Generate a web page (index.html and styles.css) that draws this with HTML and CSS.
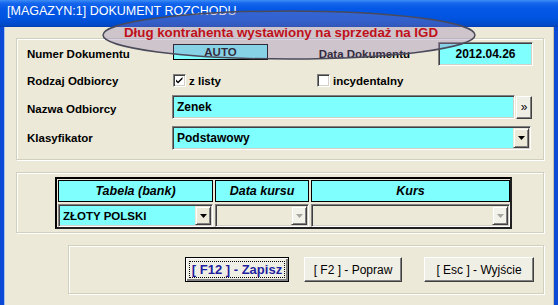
FILE: index.html
```html
<!DOCTYPE html>
<html>
<head>
<meta charset="utf-8">
<link rel="stylesheet" href="styles.css">
</head>
<body>
<div class="window">
  <div class="titlebar">[MAGAZYN:1] DOKUMENT ROZCHODU</div>
  <div class="frame">
    <div class="client">

      <div class="group group-doc">
        <div class="row row-1">
          <span class="label">Numer Dokumentu</span>
          <span class="auto">AUTO</span>
          <span class="label label-date">Data Dokumentu</span>
          <span class="field date">2012.04.26</span>
        </div>
        <div class="row row-2">
          <span class="label">Rodzaj Odbiorcy</span>
          <span class="check check-1">
            <span class="box"><svg width="11" height="11" viewBox="0 0 11 11"><path d="M2 4.5l2 2 4.5-4.5v2l-4.5 4.5-2-2z" fill="#000"/></svg></span>z listy
          </span>
          <span class="check"><span class="box"></span>incydentalny</span>
        </div>
        <div class="row row-3">
          <span class="label label-low">Nazwa Odbiorcy</span>
          <span class="field name">Zenek</span>
          <span class="btn-more">&raquo;</span>
        </div>
        <div class="row row-4">
          <span class="label">Klasyfikator</span>
          <span class="field combo">Podstawowy<span class="drop"><svg width="7" height="4" viewBox="0 0 7 4"><path d="M0 0h7l-3.5 4z" fill="#000"/></svg></span></span>
        </div>
      </div>

      <div class="group group-rates">
        <div class="rates">
          <div class="rates-row">
            <span class="head col-1">Tabela (bank)</span>
            <span class="head col-2">Data kursu</span>
            <span class="head col-3">Kurs</span>
          </div>
          <div class="rates-row rates-values">
            <span class="field cell col-1">ZŁOTY POLSKI<span class="drop"><svg width="7" height="4" viewBox="0 0 7 4"><path d="M0 0h7l-3.5 4z" fill="#000"/></svg></span></span>
            <span class="field cell disabled col-2"><span class="drop"><svg width="7" height="4" viewBox="0 0 7 4"><path d="M0 0h7l-3.5 4z" fill="#a7a69c"/></svg></span></span>
            <span class="field cell disabled col-3"><span class="drop"><svg width="7" height="4" viewBox="0 0 7 4"><path d="M0 0h7l-3.5 4z" fill="#a7a69c"/></svg></span></span>
          </div>
        </div>
      </div>

      <div class="group group-buttons">
        <span class="btn btn-default btn-save"><span class="focus">[ F12 ] - Zapisz</span></span>
        <span class="btn btn-edit">[ F2 ] - Popraw</span>
        <span class="btn btn-exit">[ Esc ] - Wyjście</span>
      </div>

    </div>
  </div>

  <div class="notice">
    <svg width="380" height="62" viewBox="0 0 380 62"><ellipse cx="189" cy="31" rx="186" ry="24" fill="rgba(150,125,180,0.34)" stroke="#4a4a5a" stroke-width="1.5"/></svg>
    <span class="notice-text">Dług kontrahenta wystawiony na sprzedaż na IGD</span>
  </div>
</div>
</body>
</html>
```

FILE: styles.css
```css
body {
  margin: 0;
  font-family: "Liberation Sans", Arial, sans-serif;
  color: #000;
}
.window {
  position: relative;
  width: 558px;
  height: 305px;
  overflow: hidden;
  background: #ECE9D8;
}
.titlebar {
  height: 23px;
  padding: 4px 0 0 7px;
  color: #fff;
  font-size: 12.5px;
  background: linear-gradient(#3D8DF5 0, #1767EE 3px, #0659E6 8px, #0054E0 18px, #0249C8 25px, #013FB0 27px);
}
.frame {
  height: 278px;
  border-left: 4px solid #0A4AD4;
  border-right: 4px solid #0A4AD4;
  box-shadow: inset 1px 0 #A8C0EC, inset -1px 0 #C5C2B2;
}
.client {
  padding: 11px 10px 0 12px;
}

/* etched group boxes */
.group {
  box-sizing: border-box;
  border: 1px solid #D0D0BF;
  box-shadow: inset 1px 1px #fff, 1px 1px #fff;
}
.group-doc {
  height: 122px;
  padding-left: 10px;
}
.row {
  display: flex;
  align-items: center;
  height: 24px;
}
.row-1 { margin-top: 3px; }
.row-2 { margin-top: 3px; }
.row-3 { margin-top: 2px; }
.row-4 { margin-top: 7px; }
.label {
  width: 145px;
  flex: none;
  font-size: 11.5px;
  font-weight: bold;
}
.label-low {
  padding-top: 3px;
}
.label-date {
  width: auto;
  margin-left: auto;
}
.auto {
  box-sizing: border-box;
  width: 95px;
  height: 16px;
  margin: -4px 0 0 1px;
  border: 1px solid #000;
  background: #80FFFF;
  text-align: center;
  font-size: 11.5px;
  font-weight: bold;
  line-height: 14px;
}

/* sunken cyan fields */
.field {
  box-sizing: border-box;
  display: flex;
  align-items: center;
  height: 24px;
  padding-left: 4px;
  background: #80FFFF;
  border: 1px solid;
  border-color: #808080 #fff #fff #808080;
  box-shadow: inset 1px 1px #404040, inset -1px -1px #D4D0C8;
  font-size: 12px;
  font-weight: bold;
}
.date {
  width: 95px;
  margin: 0 10px 0 28px;
  justify-content: center;
  padding-left: 0;
}
.name {
  width: 343px;
}
.combo {
  width: 359px;
  padding-right: 1px;
}
.drop {
  box-sizing: border-box;
  display: flex;
  align-items: center;
  justify-content: center;
  width: 16px;
  height: 20px;
  margin-left: auto;
  background: #ECE9D8;
  border: 1px solid;
  border-color: #ECE9D8 #404040 #404040 #ECE9D8;
  box-shadow: inset 1px 1px #fff, inset -1px -1px #808080;
}
.btn-more {
  box-sizing: border-box;
  display: flex;
  align-items: center;
  justify-content: center;
  width: 16px;
  height: 23px;
  margin-left: 1px;
  background: #F0EFE6;
  border: 1px solid;
  border-color: #fff #404040 #404040 #fff;
  box-shadow: inset -1px -1px #808080;
  font-size: 12px;
}

/* checkboxes */
.check {
  display: flex;
  align-items: center;
  font-size: 11.5px;
  font-weight: bold;
  margin-top: -1px;
}
.check-1 {
  width: 144px;
  margin-left: 1px;
}
.box {
  box-sizing: border-box;
  display: flex;
  align-items: center;
  justify-content: center;
  width: 13px;
  height: 13px;
  margin-right: 3px;
  background: #fff;
  border: 1px solid;
  border-color: #808080 #fff #fff #808080;
  box-shadow: inset 1px 1px #404040, inset -1px -1px #D4D0C8;
}

/* currency table */
.group-rates {
  height: 61px;
  margin-top: 12px;
  padding: 4px 0 0 38px;
}
.rates {
  box-sizing: border-box;
  width: 457px;
  height: 52px;
  padding: 1px 0 0 1px;
  border: 2px solid #000;
  border-color: #000 #202020 #202020 #000;
}
.rates-row {
  display: flex;
  gap: 2px;
}
.rates-values {
  margin-top: 2px;
}
.head {
  box-sizing: border-box;
  height: 22px;
  border: 1px solid #000;
  background: #80FFFF;
  text-align: center;
  font-size: 12.5px;
  font-weight: bold;
  font-style: italic;
  line-height: 20px;
}
.col-1 { width: 155px; }
.col-2 { width: 94px; }
.col-3 { width: 199px; }
.cell {
  height: 23px;
  padding-right: 1px;
  font-size: 11.5px;
}
.cell .drop {
  height: 19px;
}
.disabled {
  background: #ECE9D8;
}
.disabled .drop {
  background: #F3F2EA;
}

/* buttons */
.group-buttons {
  display: flex;
  height: 49px;
  margin: 12px 0 0 52px;
  padding: 11px 0 0 116px;
}
.btn {
  box-sizing: border-box;
  display: flex;
  align-items: center;
  justify-content: center;
  height: 25px;
  background: #F0EFE6;
  border: 1px solid;
  border-color: #fff #404040 #404040 #fff;
  box-shadow: inset -1px -1px #808080;
  font-size: 12px;
}
.btn-default {
  padding: 3px;
  border-color: #000;
  box-shadow: inset 1px 1px #fff, inset -2px -2px #808080;
  color: #1F1F9F;
  font-size: 13px;
  font-weight: bold;
}
.focus {
  display: flex;
  align-items: center;
  justify-content: center;
  flex: 1;
  align-self: stretch;
  border: 1px dotted #000;
}
.btn-save { width: 104px; }
.btn-edit { width: 98px; margin-left: 15px; }
.btn-exit { width: 110px; margin-left: 22px; }

/* overlay notice */
.notice {
  position: absolute;
  left: 100px;
  top: 4px;
  width: 380px;
  height: 62px;
  pointer-events: none;
}
.notice svg {
  display: block;
}
.notice-text {
  position: absolute;
  left: 0;
  top: 20px;
  width: 362px;
  text-align: center;
  color: #C0101A;
  font-size: 13.3px;
  font-weight: bold;
  line-height: 18px;
}
```
